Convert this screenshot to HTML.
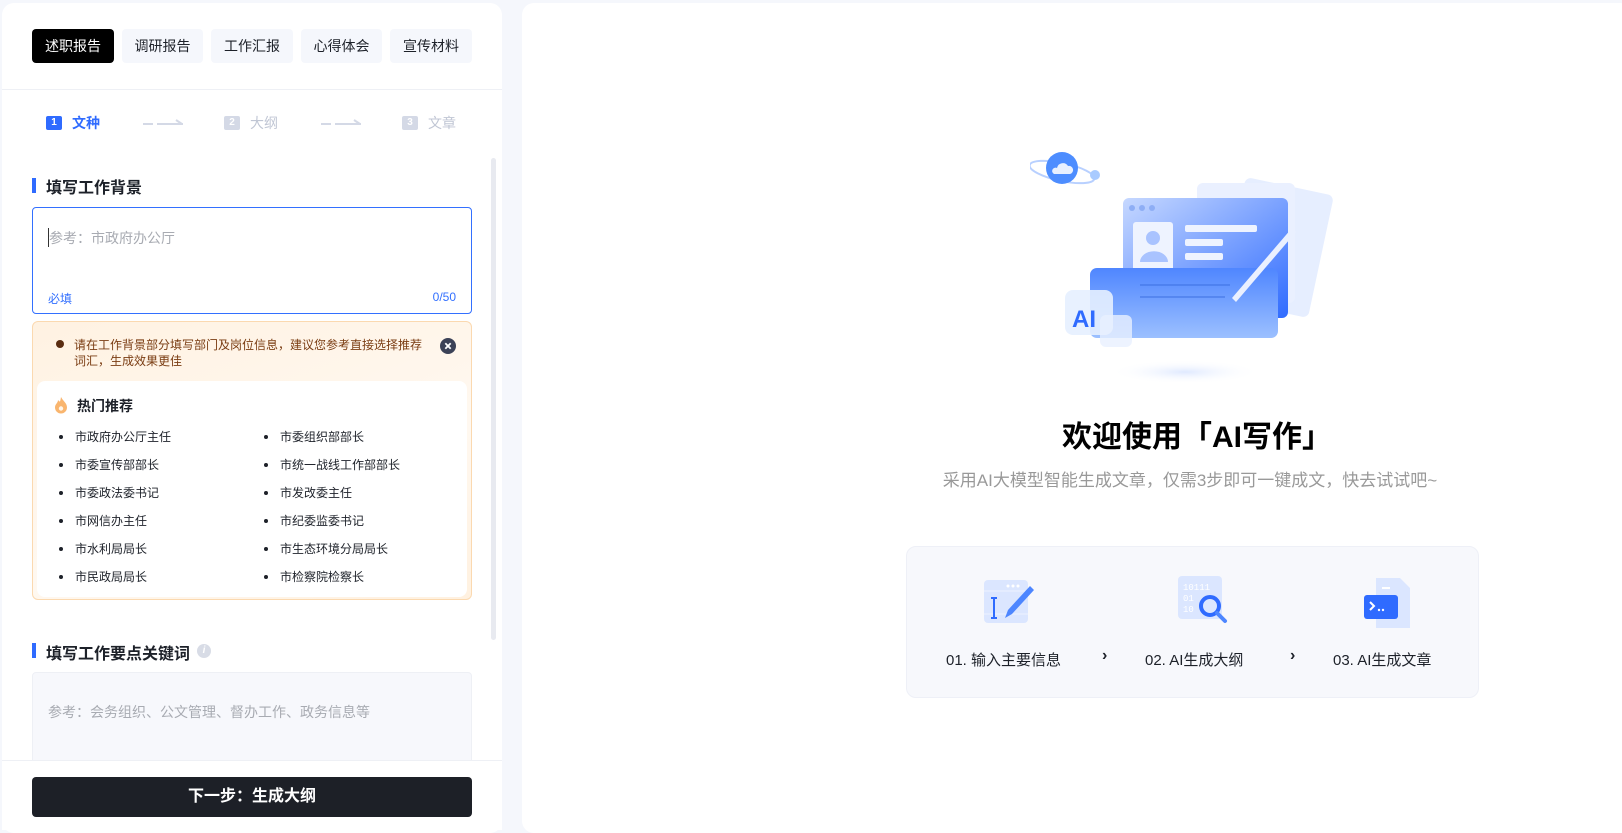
<!DOCTYPE html>
<html><head><meta charset="utf-8"><style>
*{margin:0;padding:0;box-sizing:border-box}
body{width:1622px;height:827px;background:#f5f7fc;font-family:"Liberation Sans","Noto Sans CJK SC",sans-serif;position:relative;overflow:hidden;color:#1d2129}
.a{position:absolute}
.lp{left:2px;top:3px;width:500px;height:830px;background:#fff;border-radius:12px}
.rp{left:522px;top:3px;width:1110px;height:830px;background:#fff;border-radius:12px}
.tab{position:absolute;top:29px;height:34px;border-radius:4px;background:#f5f7fc;font-size:14px;line-height:34px;text-align:center;color:#1d2129}
.tab.on{background:#000;color:#fff}
.st{font-size:14px;top:113px;line-height:20px}
.num{position:absolute;top:116px;width:16px;height:14px;border-radius:2px;font-size:10px;color:#fff;text-align:center;line-height:14px;font-weight:bold}
.sec{font-size:16px;font-weight:bold;color:#1d2129}
.bar{width:4px;height:15px;background:#2f6bff}
.li{position:absolute;font-size:12px;color:#1d2129;line-height:16px}
.li:before{content:"";position:absolute;left:-16px;top:6px;width:4px;height:4px;border-radius:50%;background:#1d2129}
</style></head><body>
<div class="a lp"></div>
<div class="tab on" style="left:32px;width:82px">述职报告</div>
<div class="tab" style="left:122px;width:81px">调研报告</div>
<div class="tab" style="left:211px;width:82px">工作汇报</div>
<div class="tab" style="left:301px;width:81px">心得体会</div>
<div class="tab" style="left:390px;width:82px">宣传材料</div>
<div class="a" style="left:2px;top:89px;width:500px;height:1px;background:#eef0f5"></div>

<div class="num" style="left:46px;background:#2f6bff">1</div>
<div class="a st" style="left:72px;color:#2f6bff;font-weight:bold">文种</div>
<svg class="a" style="left:143px;top:118px" width="42" height="10"><path d="M0 6h10M14 6h26M33 2l6 4" stroke="#d4d9e6" stroke-width="2" fill="none"/></svg>
<div class="num" style="left:224px;background:#d4d9e6">2</div>
<div class="a st" style="left:250px;color:#c0c6d4">大纲</div>
<svg class="a" style="left:321px;top:118px" width="42" height="10"><path d="M0 6h10M14 6h26M33 2l6 4" stroke="#d4d9e6" stroke-width="2" fill="none"/></svg>
<div class="num" style="left:402px;background:#d4d9e6">3</div>
<div class="a st" style="left:428px;color:#c0c6d4">文章</div>

<div class="a" style="left:491px;top:158px;width:5px;height:482px;background:#e8eaf0;border-radius:3px"></div>

<div class="a bar" style="left:32px;top:178px"></div>
<div class="a sec" style="left:46px;top:174px">填写工作背景</div>
<div class="a" style="left:32px;top:207px;width:440px;height:107px;border:1px solid #3370ff;border-radius:4px"></div>
<div class="a" style="left:48px;top:228px;width:1px;height:19px;background:#333"></div>
<div class="a" style="left:49px;top:228px;font-size:14px;color:#a8abb2">参考：市政府办公厅</div>
<div class="a" style="left:48px;top:290px;font-size:12px;color:#3370ff">必填</div>
<div class="a" style="left:410px;width:46px;text-align:right;top:290px;font-size:12px;color:#3370ff">0/50</div>

<div class="a" style="left:32px;top:321px;width:440px;height:279px;border:1px solid #fbd9b0;border-radius:6px;background:linear-gradient(160deg,#fff2e2,#fff8f0 60%,#fff1e0)"></div>
<div class="a" style="left:56px;top:340px;width:8px;height:8px;border-radius:50%;background:#5a2c10"></div>
<div class="a" style="left:74px;top:337px;width:350px;font-size:12px;line-height:16px;color:#7a3c12">请在工作背景部分填写部门及岗位信息，建议您参考直接选择推荐词汇，生成效果更佳</div>
<svg class="a" style="left:440px;top:338px" width="16" height="16"><circle cx="8" cy="8" r="8" fill="#3c4257"/><path d="M5.3 5.3l5.4 5.4M10.7 5.3l-5.4 5.4" stroke="#fff" stroke-width="1.8"/></svg>
<div class="a" style="left:37px;top:381px;width:430px;height:216px;background:#fff;border-radius:8px"></div>
<svg class="a" style="left:54px;top:396px" width="14" height="18"><path d="M7 1C9 5 13 7 13 11.5A6 6 0 0 1 1 11.5C1 8 4 7 4 4C6 6 6 7 7 1Z" fill="#f9b56e"/><circle cx="7" cy="12.5" r="2.2" fill="#fff5e8"/></svg>
<div class="a" style="left:77px;top:396px;font-size:14px;font-weight:bold">热门推荐</div>
<div class="li" style="left:75px;top:429px">市政府办公厅主任</div>
<div class="li" style="left:75px;top:457px">市委宣传部部长</div>
<div class="li" style="left:75px;top:485px">市委政法委书记</div>
<div class="li" style="left:75px;top:513px">市网信办主任</div>
<div class="li" style="left:75px;top:541px">市水利局局长</div>
<div class="li" style="left:75px;top:569px">市民政局局长</div>
<div class="li" style="left:280px;top:429px">市委组织部部长</div>
<div class="li" style="left:280px;top:457px">市统一战线工作部部长</div>
<div class="li" style="left:280px;top:485px">市发改委主任</div>
<div class="li" style="left:280px;top:513px">市纪委监委书记</div>
<div class="li" style="left:280px;top:541px">市生态环境分局局长</div>
<div class="li" style="left:280px;top:569px">市检察院检察长</div>

<div class="a bar" style="left:32px;top:643px"></div>
<div class="a sec" style="left:46px;top:640px">填写工作要点关键词</div>
<div class="a" style="left:197px;top:644px;width:14px;height:14px;border-radius:50%;background:#d8dce6;color:#fff;font-size:10px;font-style:italic;font-weight:bold;text-align:center;line-height:14px">i</div>
<div class="a" style="left:32px;top:672px;width:440px;height:100px;background:#f7f8fc;border:1px solid #eef0f5;border-radius:4px"></div>
<div class="a" style="left:48px;top:702px;font-size:14px;color:#a8abb2">参考：会务组织、公文管理、督办工作、政务信息等</div>
<div class="a" style="left:2px;top:760px;width:500px;height:70px;background:#fff;border-top:1px solid #eef0f5"></div>
<div class="a" style="left:32px;top:777px;width:440px;height:40px;background:#1d2027;border-radius:4px;color:#fff;font-size:16px;font-weight:bold;text-align:center;line-height:40px">下一步：生成大纲</div>

<div class="a rp"></div>
<svg class="a" style="left:1030px;top:150px" width="310" height="240">
<defs><linearGradient id="g1" x1="0" y1="0" x2="1" y2="1"><stop offset="0" stop-color="#c6d8ff"/><stop offset="1" stop-color="#2f6bff"/></linearGradient>
<linearGradient id="g2" x1="0" y1="0" x2="0" y2="1"><stop offset="0" stop-color="#4f86ff"/><stop offset="1" stop-color="#9cc0ff"/></linearGradient>
<radialGradient id="g3"><stop offset="0" stop-color="#dfe9ff"/><stop offset="1" stop-color="#fff" stop-opacity="0"/></radialGradient></defs>
<ellipse cx="155" cy="222" rx="75" ry="12" fill="url(#g3)"/>
<rect x="202" y="35" width="90" height="125" rx="6" fill="#e6eeff" transform="rotate(12 247 97)"/>
<rect x="167" y="33" width="98" height="120" rx="6" fill="#eaf0ff"/>
<rect x="93" y="48" width="165" height="120" rx="6" fill="url(#g1)"/>
<circle cx="102" cy="58" r="3" fill="#8eaef5"/><circle cx="112" cy="58" r="3" fill="#8eaef5"/><circle cx="122" cy="58" r="3" fill="#8eaef5"/>
<rect x="103" y="72" width="40" height="50" rx="3" fill="#eef3ff"/>
<circle cx="123" cy="88" r="7" fill="#a9c3ff"/><path d="M110 112a13 10 0 0 1 28 0z" fill="#a9c3ff"/>
<rect x="155" y="75" width="72" height="7" rx="2" fill="#eef3ff"/>
<rect x="155" y="89" width="38" height="7" rx="2" fill="#eef3ff"/>
<rect x="155" y="103" width="38" height="7" rx="2" fill="#eef3ff"/>
<rect x="60" y="118" width="188" height="70" rx="7" fill="url(#g2)"/>
<path d="M110 135h90M110 147h85" stroke="#3c6fe0" stroke-width="1"/>
<path d="M262 78l-60 70 4 4 60-70z" fill="#eaf0ff"/>
<rect x="35" y="140" width="48" height="45" rx="8" fill="#e6efff" opacity=".9"/>
<rect x="70" y="165" width="32" height="32" rx="6" fill="#e9f0ff" opacity=".8"/>
<text x="42" y="177" font-family="Liberation Sans" font-weight="bold" font-size="24" fill="#2f6bff">AI</text>
<ellipse cx="32" cy="22" rx="33" ry="9" fill="none" stroke="#b8d0ff" stroke-width="2" transform="rotate(12 32 22)"/>
<circle cx="32" cy="18" r="16" fill="#4d8dff"/>
<path d="M24 24h16a4 4 0 0 0-2-8 6 6 0 0 0-11 2 3 3 0 0 0-3 6z" fill="#e8f0ff"/>
<circle cx="65" cy="25" r="5" fill="#a9cbff"/>
</svg>
<div class="a" style="left:897px;width:600px;text-align:center;top:412px;font-size:30px;font-weight:bold;color:#000">欢迎使用「AI写作」</div>
<div class="a" style="left:890px;width:600px;text-align:center;top:466px;font-size:17px;color:#999">采用AI大模型智能生成文章，仅需3步即可一键成文，快去试试吧~</div>

<div class="a" style="left:906px;top:546px;width:573px;height:152px;background:#f7f8fc;border:1px solid #eef0f7;border-radius:10px"></div>
<svg class="a" style="left:982px;top:576px" width="56" height="50"><rect x="2" y="4" width="44" height="43" rx="4" fill="#dbe6ff"/><path d="M2 15h44M2 38h44" stroke="#eef3ff"/><circle cx="26" cy="10" r="1.5" fill="#fff"/><circle cx="31" cy="10" r="1.5" fill="#fff"/><circle cx="36" cy="10" r="1.5" fill="#fff"/><path d="M12 22v20M9 22h6M9 42h6" stroke="#2f6bff" stroke-width="2"/><path d="M48 10l-22 24-3 8 7-4 22-24z" fill="#4d86ff"/></svg>
<div class="a" style="left:946px;top:649px;font-size:15px">01. 输入主要信息</div>
<div class="a" style="left:1102px;top:647px;font-size:16px;font-weight:bold">›</div>
<svg class="a" style="left:1176px;top:574px" width="56" height="56"><rect x="2" y="2" width="44" height="43" rx="4" fill="#dbe6ff"/><text x="7" y="16" font-size="9" fill="#fff" font-family="Liberation Mono">10111</text><text x="7" y="27" font-size="9" fill="#fff" font-family="Liberation Mono">01</text><text x="7" y="38" font-size="9" fill="#fff" font-family="Liberation Mono">10</text><circle cx="34" cy="32" r="9" fill="none" stroke="#2f6bff" stroke-width="4"/><path d="M41 39l8 8" stroke="#4d86ff" stroke-width="4" stroke-linecap="round"/></svg>
<div class="a" style="left:1145px;top:649px;font-size:15px">02. AI生成大纲</div>
<div class="a" style="left:1290px;top:647px;font-size:16px;font-weight:bold">›</div>
<svg class="a" style="left:1362px;top:576px" width="50" height="56"><path d="M14 2h24l10 10v40H14z" fill="#dbe6ff"/><path d="M20 12h8" stroke="#fff" stroke-width="2"/><rect x="2" y="19" width="34" height="24" rx="3" fill="#2f6bff"/><path d="M8 26l4 4-4 4" stroke="#fff" stroke-width="2" fill="none"/><circle cx="17" cy="34" r="1.2" fill="#fff"/><circle cx="21" cy="34" r="1.2" fill="#fff"/></svg>
<div class="a" style="left:1333px;top:649px;font-size:15px">03. AI生成文章</div>
</body></html>
